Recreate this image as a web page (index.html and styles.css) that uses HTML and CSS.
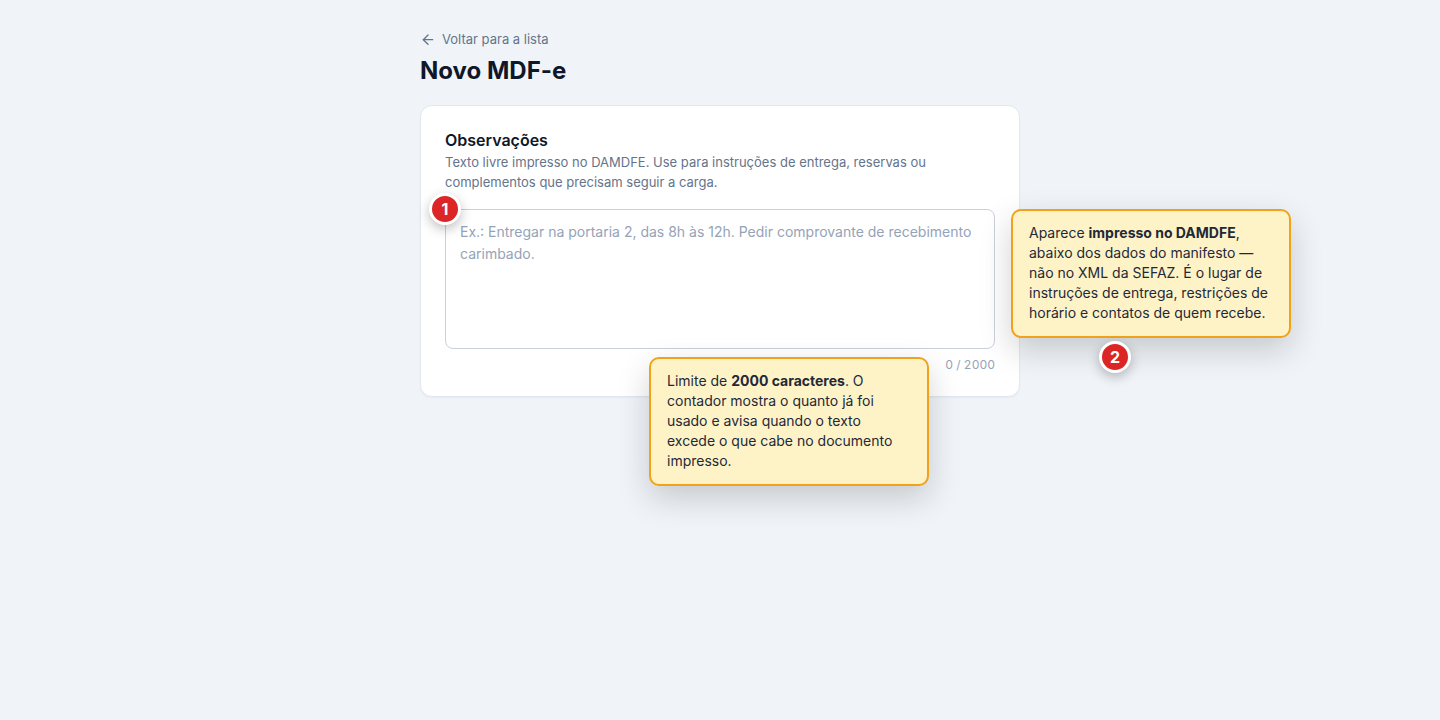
FILE: index.html
```html
<!DOCTYPE html>
<html lang="pt-BR">
<head>
    <meta charset="UTF-8">
    <meta name="viewport" content="width=device-width, initial-scale=1.0">
    <title>Novo MDF-e</title>
    <link rel="stylesheet" href="styles.css">
</head>
<body>
    <main class="page">
        <header class="page-header">
            <a class="back-link" href="#">
                <svg class="back-icon" viewBox="0 0 24 24" aria-hidden="true">
                    <path d="M19 13H5"/>
                    <path d="M12 20l-7-7 7-7"/>
                </svg>
                Voltar para a lista
            </a>
            <h1>Novo MDF-e</h1>
        </header>

        <section class="card">
            <h2><label for="observacoes">Observações</label></h2>
            <p class="description" id="ajuda">Texto livre impresso no DAMDFE. Use para instruções de entrega, reservas ou complementos que precisam seguir a carga.</p>

            <div class="field">
                <textarea id="observacoes" name="observacoes" maxlength="2000" aria-describedby="ajuda" placeholder="Ex.: Entregar na portaria 2, das 8h às 12h. Pedir comprovante de recebimento carimbado."></textarea>
                <div class="counter">0 / 2000</div>

                <div class="callout callout-print">Aparece <strong>impresso no DAMDFE</strong>, abaixo dos dados do manifesto — não no XML da SEFAZ. É o lugar de instruções de entrega, restrições de horário e contatos de quem recebe.</div>
                <div class="callout callout-limit">Limite de <strong>2000 caracteres</strong>. O contador mostra o quanto já foi usado e avisa quando o texto excede o que cabe no documento impresso.</div>
                <span class="badge badge-one">1</span>
                <span class="badge badge-two">2</span>
            </div>
        </section>
    </main>
</body>
</html>
```

FILE: styles.css
```css
* {
    box-sizing: border-box;
}

body {
    min-height: 100vh;
    margin: 0;
    padding: 29px 24px;
    font-family: Inter, "Liberation Sans", sans-serif;
    background: #f0f4f8;
    color: #0f172a;
}

.page {
    max-width: 600px;
    margin: 0 auto;
}

.page-header {
    display: flex;
    flex-direction: column;
    align-items: flex-start;
    gap: 6px;
    margin-bottom: 18px;
}

.back-link {
    display: inline-flex;
    align-items: center;
    gap: 6px;
    font-size: 13px;
    line-height: 20px;
    color: #64748b;
    text-decoration: none;
}

.back-icon {
    width: 16px;
    height: 16px;
    fill: none;
    stroke: currentColor;
    stroke-width: 2;
    stroke-linecap: round;
    stroke-linejoin: round;
}

h1 {
    margin: 0;
    font-size: 24px;
    line-height: 32px;
    font-weight: 700;
}

.card {
    padding: 24px;
    background: #fff;
    border: 1px solid #e2e8f0;
    border-radius: 12px;
    box-shadow: 0 1px 2px rgba(15, 23, 42, 0.04);
}

h2 {
    margin: 0 0 2px;
    font-size: 16px;
    line-height: 20px;
    font-weight: 600;
}

.description {
    margin: 0 0 17px;
    font-size: 13px;
    line-height: 20px;
    color: #64748b;
}

.field {
    position: relative;
}

.field textarea {
    display: block;
    width: 100%;
    height: 140px;
    padding: 11px 14px;
    border: 1px solid #cbd0d8;
    border-radius: 8px;
    background: #fff;
    color: #0f172a;
    font-family: inherit;
    font-size: 14px;
    line-height: 22px;
    resize: none;
}

.field textarea::placeholder {
    color: #94a3b8;
    opacity: 1;
}

.counter {
    margin-top: 8px;
    font-size: 12px;
    line-height: 15px;
    font-variant-numeric: tabular-nums;
    text-align: right;
    color: #94a3b8;
}

/* Annotations over the form */
.callout {
    position: absolute;
    width: 280px;
    padding: 12px 16px 13px;
    border: 2px solid #f0a31a;
    border-radius: 10px;
    background: #fef3c7;
    color: #1f2937;
    font-size: 14px;
    line-height: 20px;
    box-shadow: 0 12px 32px rgba(0, 0, 0, 0.18);
}

.callout strong {
    font-weight: 700;
}

.callout-print {
    top: 0;
    left: calc(100% + 16px);
}

.callout-limit {
    top: 148px;
    right: 66px;
}

.badge {
    position: absolute;
    display: flex;
    align-items: center;
    justify-content: center;
    width: 32px;
    height: 32px;
    border: 3px solid #fff;
    border-radius: 50%;
    background: #dc2626;
    color: #fff;
    font-size: 16px;
    line-height: 20px;
    font-weight: 700;
    box-shadow: 0 4px 12px rgba(0, 0, 0, 0.25);
}

.badge-one {
    top: -16px;
    left: -16px;
}

.badge-two {
    top: 132px;
    left: calc(100% + 104px);
}
```
